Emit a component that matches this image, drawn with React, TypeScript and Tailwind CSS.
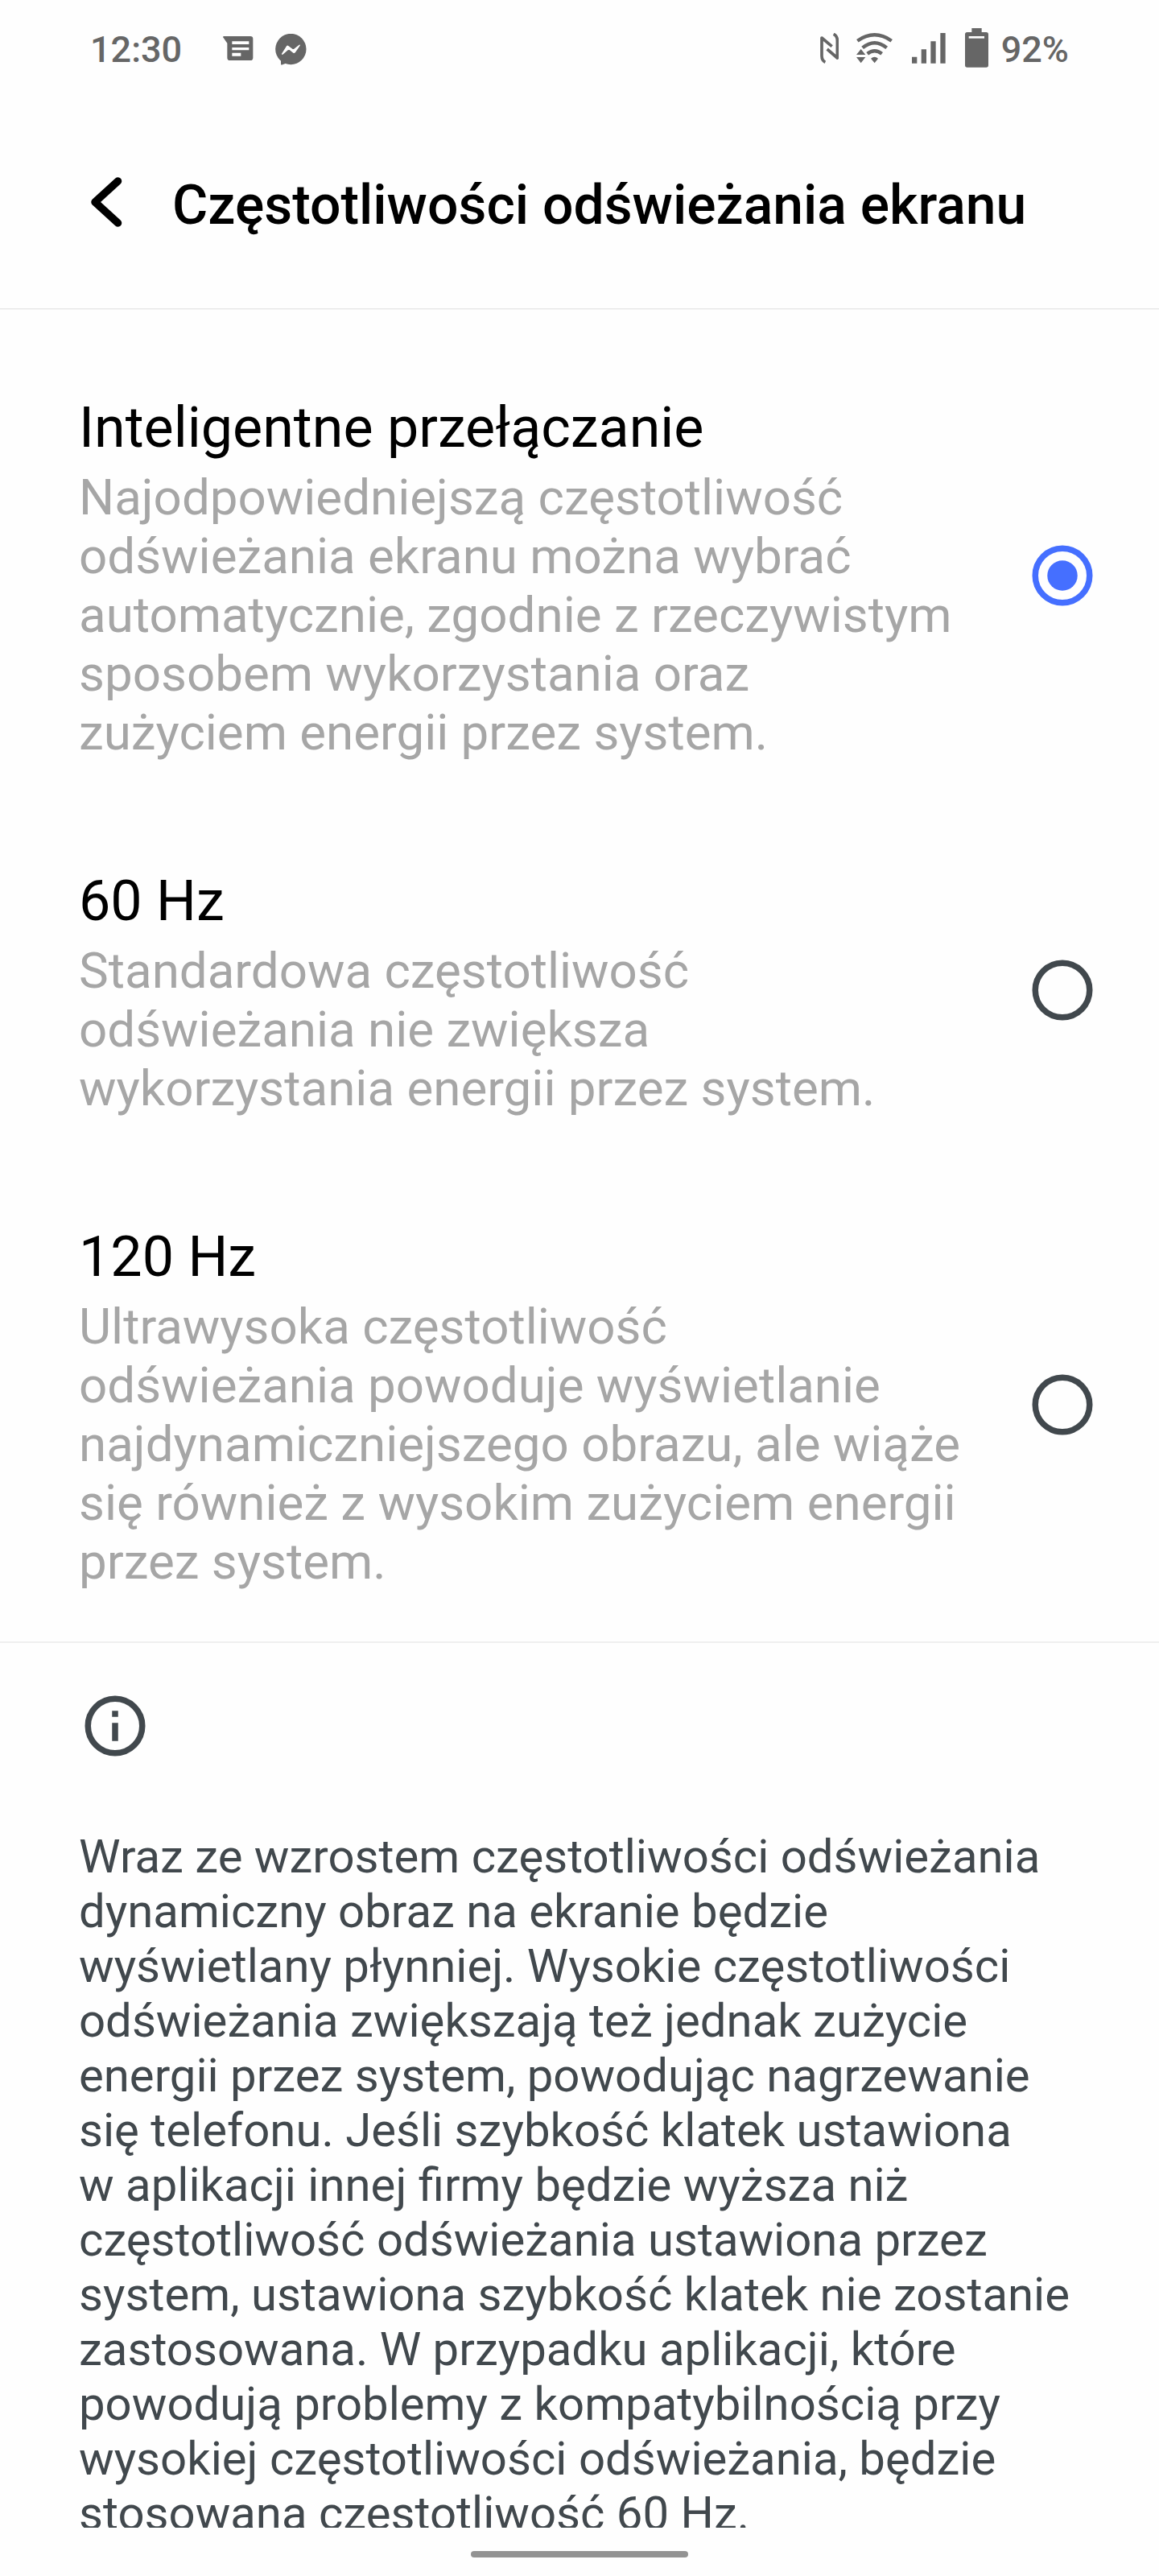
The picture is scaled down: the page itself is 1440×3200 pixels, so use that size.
import React, { useState } from 'react';

interface RefreshOption {
  id: string;
  title: string;
  description: string;
}

interface OptionRowProps {
  option: RefreshOption;
  selected: boolean;
  onSelect: (id: string) => void;
}

const OPTIONS: RefreshOption[] = [
  {
    id: 'smart',
    title: 'Inteligentne przełączanie',
    description:
      'Najodpowiedniejszą częstotliwość odświeżania ekranu można wybrać automatycznie, zgodnie z rzeczywistym sposobem wykorzystania oraz zużyciem energii przez system.',
  },
  {
    id: '60',
    title: '60 Hz',
    description:
      'Standardowa częstotliwość odświeżania nie zwiększa wykorzystania energii przez system.',
  },
  {
    id: '120',
    title: '120 Hz',
    description:
      'Ultrawysoka częstotliwość odświeżania\u00a0powoduje wyświetlanie najdynamiczniejszego obrazu, ale wiąże się również z wysokim zużyciem energii przez system.',
  },
];

const INFO_TEXT =
  'Wraz ze wzrostem częstotliwości odświeżania dynamiczny obraz na ekranie będzie wyświetlany płynniej. Wysokie częstotliwości odświeżania zwiększają też jednak zużycie energii przez system, powodując nagrzewanie się telefonu. Jeśli szybkość klatek ustawiona w\u00a0aplikacji innej firmy będzie wyższa niż częstotliwość odświeżania ustawiona przez system, ustawiona szybkość klatek nie zostanie zastosowana. W przypadku aplikacji, które powodują problemy z kompatybilnością przy wysokiej częstotliwości odświeżania, będzie stosowana częstotliwość 60 Hz.';

const MessageIcon = () => (
  <svg className="w-[38px] h-[30px]" viewBox="0 0 114 90" fill="currentColor">
    <path d="M2 6Q-3 0 4 0H102a10 10 0 0 1 10 10V80a10 10 0 0 1-10 10H26a10 10 0 0 1-10-10V26Z" />
    <path d="M34 19h63v11H34zM34 42h63v10H34zM34 62h33v12H34z" fill="#fff" />
  </svg>
);

const MessengerIcon = () => (
  <svg className="w-[39px] h-[39px]" viewBox="0 0 117 117" fill="currentColor">
    <circle cx="58" cy="57" r="57.5" />
    <path d="M21 88V112Q21 118 27 115L46 108Z" />
    <path
      d="M24 74L42 46Q45 42 49 45L64 56Q67 58 70 56L89 41Q94 39 92 44L75 69Q71 74 67 71L53 60Q50 59 47 61L28 77Q23 79 24 74Z"
      fill="#fff"
    />
  </svg>
);

const NfcIcon = () => (
  <svg className="w-[23px] h-[38px]" viewBox="0 0 69 114" fill="none" stroke="currentColor" strokeWidth="11">
    <path d="M19 109Q6 103 6 85V18L44 50" strokeLinejoin="round" />
    <path d="M26 60L64 93V28Q64 11 50 4" strokeLinejoin="round" />
  </svg>
);

const WifiIcon = () => (
  <svg className="w-[45px] h-[38px]" viewBox="0 0 135 114" fill="currentColor">
    <g fill="none" stroke="currentColor" strokeWidth="13">
      <path d="M4 29Q68 -15 131 29" />
      <path d="M23 55Q68 18 113 55" />
      <path d="M41 77Q68 56 95 77" />
    </g>
    <path d="M54 95Q68 84 81 95L68 112ZM0 81L17 60L34 81ZM0 90H34L17 112Z" />
  </svg>
);

const SignalIcon = () => (
  <svg className="w-[42px] h-[38px]" viewBox="0 0 126 114" fill="currentColor">
    <path d="M0 89h19v24H0zM35 61h19v52H35zM70 31h19v82H70zM106 0h19v113h-19z" />
  </svg>
);

const BatteryIcon = () => (
  <svg className="w-[29px] h-[49px]" viewBox="0 0 87 147" fill="currentColor">
    <path d="M25 0h37v15h17a8 8 0 0 1 8 8V138a8 8 0 0 1-8 8H8a8 8 0 0 1-8-8V23a8 8 0 0 1 8-8H25z" />
    <path d="M14 30h58v8H14z" fill="#fff" />
  </svg>
);

const StatusBar = () => (
  <div className="flex h-[120px] shrink-0 items-center justify-between px-[112px] text-[45px] leading-[116px] font-medium text-[#666]">
    <div className="flex items-center">
      <span className="mt-1 w-[165px]">12:30</span>
      <MessageIcon />
      <span className="mt-[2px] ml-[27px]">
        <MessengerIcon />
      </span>
    </div>
    <div className="flex items-center">
      <NfcIcon />
      <span className="ml-[22px]">
        <WifiIcon />
      </span>
      <span className="ml-[24px]">
        <SignalIcon />
      </span>
      <span className="mb-[2px] ml-[24px]">
        <BatteryIcon />
      </span>
      <span className="mt-1 ml-4">92%</span>
    </div>
  </div>
);

const Radio = ({ checked }: { checked: boolean }) => (
  <svg
    className={
      checked
        ? 'mb-[7px] size-[90px] shrink-0 text-[#456fff]'
        : 'mb-[7px] size-[90px] shrink-0 text-[#41484d]'
    }
    viewBox="0 0 24 24"
  >
    <circle cx="12" cy="12" r="9" fill="none" stroke="currentColor" strokeWidth="2" />
    {checked && <circle cx="12" cy="12" r="5" fill="currentColor" />}
  </svg>
);

const OptionRow: React.FC<OptionRowProps> = ({ option, selected, onSelect }) => {
  return (
    <button
      onClick={() => onSelect(option.id)}
      className="flex w-full items-center justify-between pt-[69px] pr-[75px] pb-[62px] pl-[98px] text-left"
    >
      <div className="w-[1101px]">
        <h2 className="text-[70px] leading-[82px] text-black">{option.title}</h2>
        <p className="mt-[10px] text-[61.88px] leading-[73px] text-[#a6a6a6]">{option.description}</p>
      </div>
      <Radio checked={selected} />
    </button>
  );
};

const App = () => {
  const [selected, setSelected] = useState('smart');

  return (
    <div className="flex h-[3200px] w-[1440px] flex-col overflow-hidden bg-[#fefefe] font-['Roboto',sans-serif]">
      <StatusBar />
      <header className="flex h-[264px] shrink-0 items-center border-b border-[#e5e5e5] pl-[110px] shadow-[0_1px_0_#f6f6f6]">
        <svg
          className="mb-[2px] h-[64px] w-[44px]"
          viewBox="0 0 44 64"
          fill="none"
          stroke="#000"
          strokeWidth="9.5"
          strokeLinecap="round"
          strokeLinejoin="round"
        >
          <path d="M36.5 6L8 32L36.5 58" />
        </svg>
        <h1 className="mt-[6px] ml-[60px] text-[67.85px] leading-[80px] font-medium text-black">
          Częstotliwości odświeżania ekranu
        </h1>
      </header>
      <main className="h-[2756px] shrink-0 overflow-hidden pt-[37px]">
        <section className="border-b-2 border-[#efefef]">
          {OPTIONS.map((option) => (
            <OptionRow
              key={option.id}
              option={option}
              selected={option.id === selected}
              onSelect={setSelected}
            />
          ))}
        </section>
        <section className="px-[98px] pt-[58px] text-[#41484d]">
          <svg className="size-[90px]" viewBox="0 0 24 24" fill="currentColor">
            <circle cx="12" cy="12" r="9" fill="none" stroke="currentColor" strokeWidth="2" />
            <path d="M11 7h2v2h-2zM11 11h2v6h-2z" />
          </svg>
          <p className="mt-[83px] text-[58.08px] leading-[68px]">{INFO_TEXT}</p>
        </section>
      </main>
      <div className="flex h-[60px] shrink-0 justify-center pt-[29px]">
        <div className="h-2 w-[270px] rounded-full bg-[#939393]" />
      </div>
    </div>
  );
};

export default App;
